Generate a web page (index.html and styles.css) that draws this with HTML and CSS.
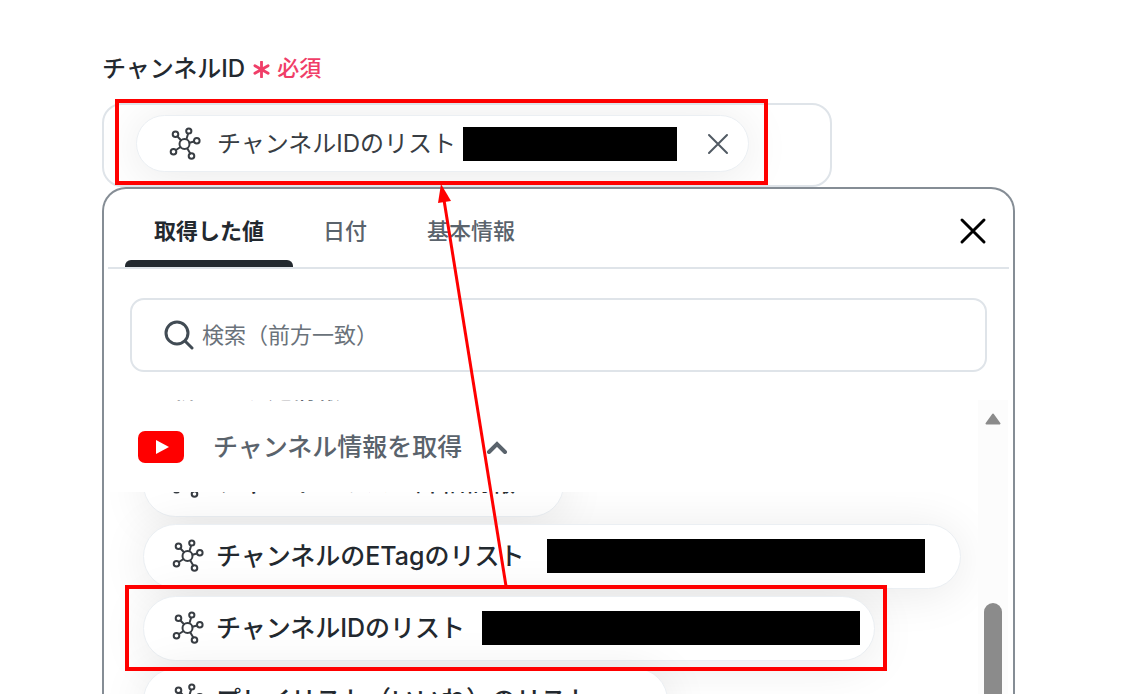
FILE: index.html
```html
<!DOCTYPE html>
<html lang="ja">
<head>
    <meta charset="UTF-8">
    <meta name="viewport" content="width=device-width, initial-scale=1.0">
    <title>チャンネルID</title>
    <link rel="stylesheet" href="styles.css">
</head>
<body>
    <svg class="defs" aria-hidden="true">
        <symbol id="hub" viewBox="0 0 34 34">
            <circle cx="16.500" cy="17" r="5"/>
            <circle cx="7.500" cy="7.300" r="2.800"/>
            <circle cx="20.800" cy="4" r="2.600"/>
            <circle cx="28.800" cy="13.700" r="2.800"/>
            <circle cx="5.500" cy="24.700" r="2.800"/>
            <circle cx="23.500" cy="29" r="2.800"/>
            <path d="M9.500 9.500l3.500 3.700M20 7l-1.500 5M26 14.500l-4.500 1.200M8 23l4.500-3M22.300 26.500l-3-5"/>
        </symbol>
    </svg>

    <main class="form">
        <div class="label">チャンネルID <span class="required"><svg class="asterisk" viewBox="0 0 18 18"><path d="M9 1v16M2 5l14 8M16 5L2 13"/></svg>必須</span></div>

        <div class="field">
            <div class="chip chip-selected">
                <svg class="hub"><use href="#hub"/></svg>
                <span class="name">チャンネルIDのリスト</span>
                <span class="mask mask-short"></span>
                <button class="remove" aria-label="削除"><svg viewBox="0 0 22 22"><path d="M2 2l18 18M20 2L2 20"/></svg></button>
            </div>
        </div>

        <section class="panel">
            <div class="tabs" role="tablist">
                <button class="tab active" role="tab">取得した値</button>
                <button class="tab" role="tab">日付</button>
                <button class="tab" role="tab">基本情報</button>
                <button class="close" aria-label="閉じる"><svg viewBox="0 0 28 28"><path d="M3 3l22 22M25 3L3 25"/></svg></button>
            </div>

            <label class="search">
                <svg viewBox="0 0 30 30"><circle cx="13" cy="13" r="11"/><path d="M21 21l7 7"/></svg>
                <input type="text" placeholder="検索（前方一致）" aria-label="検索">
            </label>

            <div class="results">
                <div class="list">
                    <div class="previous"><span>新しい予定情報</span></div>
                    <button class="group">
                        <svg class="youtube" viewBox="0 0 46 32"><rect width="46" height="32" rx="7"/><path d="M18 9l13 7-13 7z"/></svg>
                        <span class="name">チャンネル情報を取得</span>
                        <svg class="chevron" viewBox="0 0 22 14"><path d="M3 12l8-8 8 8"/></svg>
                    </button>
                    <div class="chips">
                        <button class="chip chip-cut"><svg class="hub"><use href="#hub"/></svg><span class="name">チャンネルリスト詳細情報</span></button>
                        <button class="chip chip-loose"><svg class="hub"><use href="#hub"/></svg><span class="name">チャンネルのETagのリスト</span><span class="mask"></span></button>
                        <button class="chip chip-tight"><svg class="hub"><use href="#hub"/></svg><span class="name">チャンネルIDのリスト</span><span class="mask"></span></button>
                        <button class="chip chip-wide"><svg class="hub"><use href="#hub"/></svg><span class="name">プレイリスト（いいね）のリスト</span></button>
                    </div>
                </div>
                <div class="scrollbar">
                    <svg class="up" viewBox="0 0 16 12"><path d="M8 1.500L14.500 10.500h-13z"/></svg>
                    <div class="thumb"></div>
                </div>
            </div>
        </section>
    </main>

    <svg class="notes" aria-hidden="true">
        <rect x="117" y="101" width="649" height="82"/>
        <rect x="127" y="587" width="758" height="82"/>
        <path d="M506 586L444 200"/>
        <path class="head" d="M441 184l10 17-13 2z"/>
    </svg>
</body>
</html>
```

FILE: styles.css
```css
* {
    box-sizing: border-box;
}
body {
    margin: 0;
    height: 100vh;
    overflow: hidden;
    background-color: #fff;
    color: #23292f;
    font-family: Inter, "Noto Sans CJK JP", sans-serif;
    font-size: 25px;
}
button {
    border: none;
    background: none;
    padding: 0;
    font: inherit;
    color: inherit;
    cursor: pointer;
}
svg {
    flex: none;
    fill: none;
    stroke: currentColor;
    stroke-width: 2;
    stroke-linecap: round;
}
.defs {
    position: absolute;
    width: 0;
    height: 0;
}
.form {
    height: 100%;
    padding: 48px 107px 0 102px;
    display: flex;
    flex-direction: column;
}
.label {
    display: flex;
    align-items: center;
    gap: 8px;
    height: 36px;
    margin-bottom: 19px;
    font-size: 24px;
    font-weight: 500;
}
.required {
    display: flex;
    align-items: center;
    gap: 7px;
    color: #f03e68;
    font-size: 22px;
}
.asterisk {
    width: 17px;
    height: 17px;
    margin-top: 6px;
    stroke-width: 3;
}
.field {
    flex: none;
    width: 80%;
    height: 84px;
    padding: 10px 32px;
    border: 2px solid #dfe4e9;
    border-radius: 20px;
    overflow: hidden;
}
.name {
    padding-bottom: 4px;
}
.chip {
    display: flex;
    align-items: center;
    flex: none;
    width: fit-content;
    height: 65px;
    padding: 0 35px 2px 27px;
    border: 1px solid #ebeff3;
    border-radius: 33px;
    background-color: #fff;
    box-shadow: 0 4px 48px rgba(0, 0, 0, 0.09);
    font-weight: 500;
    white-space: nowrap;
}
.chip-tight {
    padding-right: 14px;
}
.chip-wide {
    padding-right: 76px;
}
.chip-selected {
    height: 57px;
    padding: 0 19px 0 31px;
    color: #383d43;
    font-size: 24px;
    font-weight: 400;
}
.hub {
    width: 34px;
    height: 34px;
    margin-right: 11px;
    color: #383d43;
}
.chip-selected .hub {
    margin-right: 15px;
}
.mask {
    width: 378px;
    height: 34px;
    margin-left: 17px;
    background-color: #000;
}
.mask-short {
    width: 214px;
    margin-left: 7px;
}
.chip-loose .mask {
    margin-left: 22px;
}
.remove {
    display: flex;
    margin-left: 30px;
    color: #515a63;
}
.remove svg {
    width: 22px;
    height: 22px;
}
.panel {
    flex: 1;
    min-height: 0;
    display: flex;
    flex-direction: column;
    border: 2px solid #858d95;
    border-bottom: none;
    border-radius: 24px 24px 0 0;
    background-color: #fff;
}
.tabs {
    flex: none;
    display: flex;
    height: 80px;
    margin: 0 4px;
    padding: 0 17px;
    border-bottom: 2px solid #dfe4e9;
}
.tab {
    padding: 2px 30px 0;
    color: #5a636c;
    font-size: 22px;
    font-weight: 500;
}
.tab.active {
    position: relative;
    padding: 2px 29px 0;
    color: #23292f;
    font-weight: 700;
}
.tab.active::after {
    content: "";
    position: absolute;
    left: 0;
    right: 0;
    bottom: 0;
    height: 7px;
    border-radius: 6px 6px 0 0;
    background-color: #23292f;
}
.close {
    display: flex;
    align-items: center;
    margin-left: auto;
    padding: 6px 5px 0 0;
    color: #000;
}
.close svg {
    width: 28px;
    height: 28px;
    stroke-width: 3;
}
.search {
    flex: none;
    display: flex;
    align-items: center;
    gap: 8px;
    height: 74px;
    margin: 29px 26px 28px;
    padding: 0 32px;
    border: 2px solid #dfe4e9;
    border-radius: 14px;
    color: #414b54;
}
.search svg {
    width: 30px;
    height: 30px;
    stroke-width: 3;
}
.search input {
    flex: 1;
    border: none;
    outline: none;
    padding: 0;
    background: none;
    font: inherit;
    font-size: 22px;
}
.search input::placeholder {
    color: #6a727a;
    opacity: 1;
}
.results {
    flex: 1;
    min-height: 0;
    display: flex;
    margin-right: 5px;
    overflow: hidden;
}
.list {
    flex: 1;
    display: flex;
    flex-direction: column;
    overflow: hidden;
}
.previous {
    flex: none;
    display: flex;
    align-items: flex-end;
    height: 2px;
    padding-left: 68px;
    overflow: hidden;
    color: #5a636c;
    font-size: 24px;
    font-weight: 500;
    line-height: 24px;
}
.group {
    flex: none;
    display: flex;
    align-items: center;
    height: 90px;
    padding-left: 34px;
    background-color: #fff;
    color: #5a636c;
    font-weight: 500;
}
.youtube {
    width: 46px;
    height: 32px;
    margin-right: 29px;
    stroke: none;
    fill: #f00;
}
.youtube path {
    fill: #fff;
}
.chevron {
    width: 22px;
    height: 14px;
    margin-left: 24px;
    stroke-width: 4;
}
.chips {
    flex: 1;
    min-height: 0;
    display: flex;
    flex-direction: column;
    gap: 7px;
    padding-left: 39px;
    overflow: hidden;
}
.chip-cut {
    margin-top: -40px;
    padding: 0 48px 6px 27px;
}
.scrollbar {
    width: 30px;
    display: flex;
    flex-direction: column;
    align-items: center;
    background-color: #fcfcfc;
    color: #8b8b8b;
}
.up {
    width: 16px;
    height: 12px;
    margin: 13px 0 178px;
    fill: currentColor;
    stroke-linejoin: round;
}
.thumb {
    flex: 1;
    width: 18px;
    border-radius: 9px 9px 0 0;
    background-color: #8b8b8b;
}
.notes {
    position: absolute;
    top: 0;
    left: 0;
    width: 100%;
    height: 100%;
    pointer-events: none;
    stroke: #f00;
    stroke-width: 4;
    stroke-linecap: butt;
}
.notes path {
    stroke-width: 3;
}
.notes .head {
    fill: #f00;
    stroke: none;
}
```
